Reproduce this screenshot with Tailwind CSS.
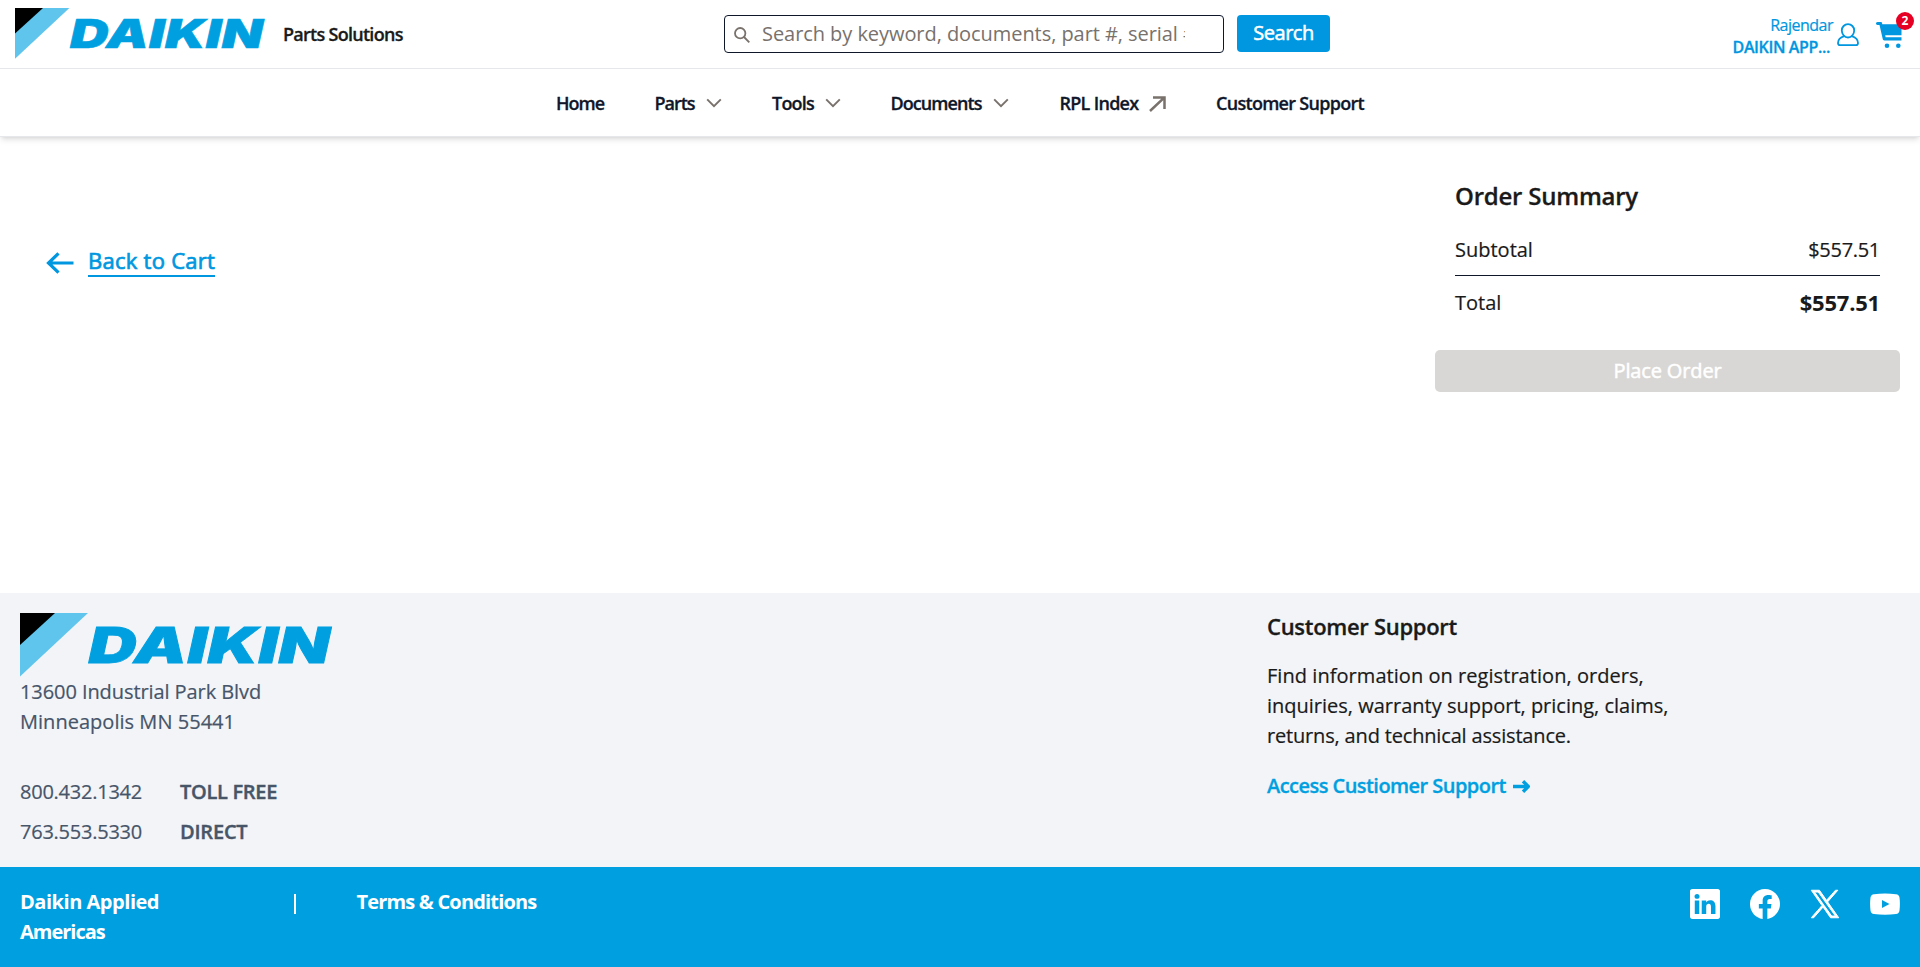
<!DOCTYPE html>
<html lang="en">
<head>
<meta charset="utf-8">
<title>Daikin Parts Solutions</title>
<script src="https://cdn.jsdelivr.net/npm/@tailwindcss/browser@4"></script>
</head>
<body class="flex h-[967px] flex-col overflow-hidden bg-white font-['Open_Sans','Noto_Sans',sans-serif] text-[20px] leading-[30px] whitespace-nowrap text-[#1a1a1a]">
<svg class="hidden">
  <symbol id="logo" viewBox="0 0 312.5 64">
    <path d="M0 0H68L0 63.5Z" fill="#5fc5ed"/>
    <path d="M0 0H35L0 32Z" fill="#000"/>
    <text transform="translate(68.6 49.7) scale(1.365 1)" x="0" y="0" class="fill-[#00a0e0] stroke-[#00a0e0] stroke-[0.8px] font-['Inter'] text-[48.8px] font-black tracking-[0.4px] italic">DAIKIN</text>
  </symbol>
  <symbol id="chev" viewBox="0 0 16 10"><path d="M1.2 1.3L8 8.2L14.8 1.3" fill="none" stroke="#78716c" stroke-width="1.9"/></symbol>
</svg>

<div class="relative z-10 h-[137px] shrink-0 border-b border-[#e5e7eb] bg-white shadow-md">
  <header class="flex h-[69px] items-start border-b border-[#e5e7eb] pl-[15px]">
    <svg class="mt-2 h-[51.2px] w-[250px] shrink-0 overflow-visible"><use href="#logo"/></svg>
    <div class="mt-[19px] ml-[18px] w-[120px] text-[18px] font-semibold tracking-[-0.72px] [-webkit-text-stroke:0.3px]">Parts Solutions</div>
    <div class="mt-[15px] ml-[321px] flex h-[38px] w-[500px] items-center rounded-[4px] border border-[#0f172a] pl-[9px]">
      <svg class="mt-0.5 h-4 w-4 shrink-0" viewBox="0 0 16 16" fill="none" stroke="#78716c" stroke-width="1.8"><circle cx="6.2" cy="6.2" r="5.2"/><path d="M10 10L15.3 15.3"/></svg>
      <div class="ml-[12px] w-[423px] overflow-hidden tracking-[-0.06px] text-[#78716c]">Search by keyword, documents, part #, serial #</div>
    </div>
    <button class="mt-[15px] ml-[13px] h-[37px] w-[93px] rounded-[4px] bg-[#0097e0] pb-px leading-[36px] tracking-[-0.5px] text-white [-webkit-text-stroke:0.5px]">Search</button>
    <div class="mt-[14px] ml-auto flex flex-col items-end text-right text-[16px] leading-[22px] text-[#0097e0]">
      <span class="tracking-[-0.5px] [-webkit-text-stroke:0.2px]">Rajendar</span>
      <span class="pr-[3px] font-semibold tracking-[-0.38px] [-webkit-text-stroke:0.3px]">DAIKIN APP...</span>
    </div>
    <svg class="mt-[23px] ml-1 h-6 w-[22px]" viewBox="0 0 22 24" fill="none" stroke="#0097e0" stroke-width="1.8"><path d="M11 1.2C14.5 1.2 17.2 3.9 17.2 7.5S14.5 14.5 11 14.5S4.8 11.1 4.8 7.5S7.5 1.2 11 1.2Z"/><path d="M7.4 13.1C3.5 14.2 1 16.5 1 20C1 21.5 1.8 22.2 3 22.2H19C20.2 22.2 21 21.5 21 20C21 16.5 18.5 14.2 14.6 13.1"/></svg>
    <div class="relative mt-[22px] mr-[18px] ml-[17px]">
      <svg class="h-[26px] w-[26px]" viewBox="0 0 26 26" fill="#0097e0"><path d="M1.5 0H4.8C5.5 0 5.8 .4 6 1L6.3 2.2H25.5V13.2H9.2L9.6 15.3H25.5V18.4H8.5C7.5 18.4 7 18 6.8 17.2L3.5 3H1.5C-.5 3-.5 0 1.5 0Z"/><circle cx="11" cy="23.7" r="2.3"/><circle cx="22.3" cy="23.7" r="2.3"/></svg>
      <span class="absolute -top-[10px] left-[20px] h-[18px] w-[18px] rounded-full bg-[#e60023] text-center text-[12px] leading-[18px] font-bold text-white">2</span>
    </div>
  </header>
  <nav class="flex h-[68px] items-center pl-[556px] text-[18px] font-semibold text-[#0f172a] [-webkit-text-stroke:0.3px]">
    <a class="w-[98.500px] tracking-[-1.02px]">Home</a>
    <a class="flex w-[117.500px] items-center tracking-[-1.03px]"><span class="w-[51.500px]">Parts</span><svg class="h-[10px] w-4"><use href="#chev"/></svg></a>
    <a class="flex w-[118.500px] items-center tracking-[-0.79px]"><span class="w-[53px]">Tools</span><svg class="h-[10px] w-4"><use href="#chev"/></svg></a>
    <a class="flex w-[169px] items-center tracking-[-0.94px]"><span class="w-[102.500px]">Documents</span><svg class="h-[10px] w-4"><use href="#chev"/></svg></a>
    <a class="flex w-[156.500px] items-center tracking-[-0.72px]"><span class="w-[89.500px]">RPL Index</span><svg class="mt-0.5 h-4 w-[17px]" viewBox="0 0 17 16" fill="none" stroke="#78716c" stroke-width="2.5"><path d="M1 15L15.5 1.4M4 1.4H15.5V13"/></svg></a>
    <a class="tracking-[-0.71px]">Customer Support</a>
  </nav>
</div>

<main class="flex h-[456px] shrink-0 items-start justify-between pr-5 pl-[46px]">
  <a class="mt-[108px] flex items-start text-[#0097e0]">
    <svg class="mt-[7px] h-[22px] w-7" viewBox="0 0 28 22" fill="none" stroke="#0097e0" stroke-width="3.2"><path d="M12.5 1.3L2.5 11L12.5 20.7M2.5 11H27.5"/></svg>
    <span class="ml-[14px] w-[127px] border-b-2 border-[#0097e0] text-[22px] tracking-[0.27px] [-webkit-text-stroke:0.7px]">Back to Cart</span>
  </a>
  <section class="mt-[44px] w-[465px]">
    <div class="px-5">
      <h2 class="text-[24px] font-semibold tracking-[-0.23px] [-webkit-text-stroke:0.3px]">Order Summary</h2>
      <div class="mt-6 flex justify-between border-b border-[#0f172a] pb-[10px] [-webkit-text-stroke:0.2px]"><span>Subtotal</span><span class="tracking-[-0.3px]">$557.51</span></div>
      <div class="mt-3 flex justify-between"><span class="[-webkit-text-stroke:0.2px]">Total</span><span class="-mt-px mb-px text-[22px] font-bold tracking-[-0.2px]">$557.51</span></div>
    </div>
    <button class="mt-[32px] block h-[42px] w-full rounded-[5px] bg-[#d9d7d5] tracking-[-0.14px] text-white [-webkit-text-stroke:0.5px]">Place Order</button>
  </section>
</main>

<footer class="shrink-0">
  <div class="flex h-[274px] items-start bg-[#f2f4f8] pt-5 pl-5 text-[#475569]">
    <div class="w-[1247px] [-webkit-text-stroke:0.2px]">
      <svg class="block h-[64px] w-[312.5px] overflow-visible"><use href="#logo"/></svg>
      <div class="tracking-[-0.08px]">13600 Industrial Park Blvd</div>
      <div class="tracking-[0.03px]">Minneapolis MN 55441</div>
      <div class="mt-10 flex"><span class="w-[160px] tracking-[-0.24px]">800.432.1342</span><span class="font-semibold tracking-[-0.3px] [-webkit-text-stroke:0.4px]">TOLL FREE</span></div>
      <div class="mt-[10px] flex"><span class="w-[160px] tracking-[-0.24px]">763.553.5330</span><span class="font-semibold tracking-[-0.2px] [-webkit-text-stroke:0.4px]">DIRECT</span></div>
    </div>
    <div class="-mt-[2px] text-[#1a1a1a]">
      <h3 class="text-[22px] font-semibold tracking-[-0.3px] [-webkit-text-stroke:0.3px]">Customer Support</h3>
      <p class="mt-5 [-webkit-text-stroke:0.2px]"><span class="tracking-[0.05px]">Find information on registration, orders,</span><br>inquiries, warranty support, pricing, claims,<br><span class="tracking-[-0.17px]">returns, and technical assistance.</span></p>
      <a class="mt-5 flex items-center font-semibold tracking-[-0.54px] text-[#00a0e0] [-webkit-text-stroke:0.3px]"><span class="w-[246px]">Access Custiomer Support</span><svg class="h-[13px] w-[18px]" viewBox="0 0 18 13" fill="none" stroke="#00a0e0" stroke-width="3.4"><path d="M0 6.5H15.5M10 1.2L15.3 6.5L10 11.8" stroke-linejoin="round"/></svg></a>
    </div>
  </div>
  <div class="flex h-[100px] items-start bg-[#00a0e0] pt-5 pr-5 pl-5 font-bold text-white">
    <div class="w-[272px]"><span class="tracking-[-0.47px]">Daikin Applied</span><br><span class="tracking-[-1px]">Americas</span></div>
    <div class="mt-[7px] ml-[2px] h-5 w-[2px] bg-white"></div>
    <div class="ml-[60.500px] tracking-[-0.82px]">Terms &amp; Conditions</div>
    <div class="mt-0.5 ml-auto flex gap-[30px]">
      <svg class="h-[30px] w-[30px]" viewBox="0 0 16 16" fill="#fff"><path d="M0 1.146C0 .513.526 0 1.175 0h13.650C15.474 0 16 .513 16 1.146v13.708c0 .633-.526 1.146-1.175 1.146H1.175C.526 16 0 15.487 0 14.854zm4.943 12.248V6.169H2.542v7.225zm-1.200-8.212c.837 0 1.358-.554 1.358-1.248-.015-.709-.520-1.248-1.342-1.248S2.400 3.226 2.400 3.934c0 .694.521 1.248 1.327 1.248zm4.908 8.212V9.359c0-.216.016-.432.080-.586.173-.431.568-.878 1.232-.878.869 0 1.216.662 1.216 1.634v3.865h2.401V9.250c0-2.220-1.184-3.252-2.764-3.252-1.274 0-1.845.700-2.165 1.193v.025h-.016l.016-.025V6.169h-2.400c.030.678 0 7.225 0 7.225z"/></svg>
      <svg class="h-[30px] w-[30px]" viewBox="0 0 16 16" fill="#fff"><path d="M16 8.049c0-4.446-3.582-8.050-8-8.050C3.580 0-.002 3.603-.002 8.050c0 4.017 2.926 7.347 6.750 7.951v-5.625h-2.030V8.050H6.750V6.275c0-2.017 1.195-3.131 3.022-3.131.876 0 1.791.157 1.791.157v1.980h-1.009c-.993 0-1.303.621-1.303 1.258v1.510h2.218l-.354 2.326H9.250V16c3.824-.604 6.750-3.934 6.750-7.951"/></svg>
      <svg class="h-[30px] w-[30px]" viewBox="0 0 24 24" fill="#fff" stroke="#fff" stroke-width="0.8"><path d="M14.095 10.317L22.286 1h-1.940l-7.115 8.088L7.551 1H1l8.590 12.231L1 23h1.940l7.511-8.543L16.449 23H23zM11.436 13.340l-.870-1.218L3.641 2.432h2.981l5.589 7.822.867 1.218 7.265 10.166h-2.981z"/></svg>
      <svg class="h-[30px] w-[30px]" viewBox="0 0 30 30"><path d="M4 5.2Q15 3.8 26 5.2Q29 5.5 29.5 8.5Q30.3 15 29.5 21.5Q29 24.8 26 25.1Q15 26.4 4 25.1Q1 24.8 .5 21.5Q-.3 15 .5 8.5Q1 5.5 4 5.2Z" fill="#fff"/><path d="M12 11V19L19.5 15Z" fill="#00a0e0"/></svg>
    </div>
  </div>
</footer>
</body>
</html>
